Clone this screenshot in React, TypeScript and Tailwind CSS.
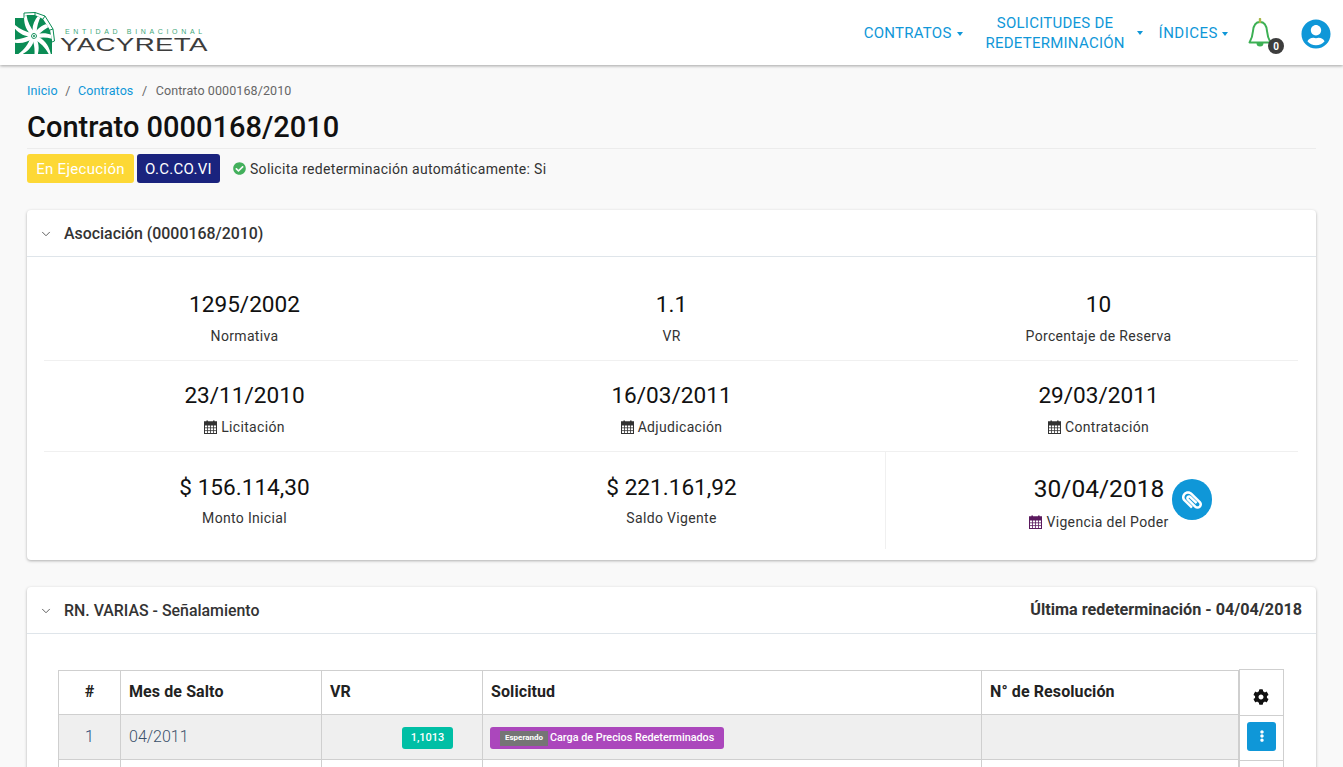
import { ChevronDown } from "lucide-react";
import { FaCheckCircle, FaCog, FaEllipsisV, FaPaperclip, FaUserCircle } from "react-icons/fa";

const blue = "text-[#0f97d8]";

function Logo() {
  const blades = Array.from({ length: 9 }, (_, i) => i * 40);
  return (
    <div className="flex items-end gap-[5px]">
      <svg width="40" height="42" viewBox="0 0 40 42" className="shrink-0">
        <defs>
          <clipPath id="logo-clip">
            <path d="M0 42 V6 H9 L11 3 L20 3 L28 7 L35 18 L37 28 V42 Z" />
          </clipPath>
        </defs>
        <path d="M9 6 L9 1 L20 0.5 L30 4 L38 17 L39.5 29 L37 30" fill="#fff" stroke="#0b8c55" strokeWidth="1" />
        <path d="M20 0.5 L20 3 M30 4 L28 7 M38 17 L35 18" stroke="#0b8c55" strokeWidth="1" />
        <g clipPath="url(#logo-clip)">
          <rect x="0" y="0" width="40" height="42" fill="#0b8c55" />
          <g transform="translate(19 24)">
            {blades.map((a) => (
              <path
                key={a}
                transform={`rotate(${a})`}
                d="M1 -3 C5 -10 14 -15 28 -13 C18 -12 9 -7 3.5 0 C3 -1 2 -2 1 -3 Z"
                fill="#fff"
              />
            ))}
          </g>
        </g>
        <circle cx="19" cy="24" r="2" fill="#fff" />
        <circle cx="19" cy="24" r="1" fill="#0b8c55" />
      </svg>
      <div className="flex flex-col">
        <span className="text-[7px] leading-[8px] tracking-[3.65px] text-[#3fa97c] font-['Liberation_Sans',sans-serif] ml-[5px] whitespace-nowrap">
          ENTIDAD BINACIONAL
        </span>
        <span className="text-[18px] leading-[17px] tracking-[0.2px] text-[#3d3d3d] font-['Liberation_Sans',sans-serif] scale-x-[1.54] origin-left whitespace-nowrap mt-[1px]">
          YACYRETA
        </span>
      </div>
    </div>
  );
}

function Caret({ gap = "ml-[4px]" }: { gap?: string }) {
  return <span className={`inline-block ${gap} align-middle border-x-[3.5px] border-x-transparent border-t-[4px] border-t-[#0f97d8]`} />;
}

function BellIcon() {
  return (
    <svg width="24" height="30" viewBox="0 0 24 30" fill="none" className="absolute left-0 top-[3px]">
      <path d="M12 4 C7 4 5.5 8 5 13 C4.5 19 3 22 1.5 24.5 H22.5 C21 22 19.5 19 19 13 C18.5 8 17 4 12 4 Z" stroke="#3cb054" strokeWidth="2" strokeLinejoin="round" />
      <path d="M12 1 V4" stroke="#a8b84a" strokeWidth="2.4" strokeLinecap="round" />
      <path d="M8.5 25 a3.5 3.5 0 0 0 7 0 Z" fill="#3cb054" />
    </svg>
  );
}

function CalendarIcon({ color = "#333" }: { color?: string }) {
  return (
    <svg width="13" height="14" viewBox="0 0 13 14" fill="none" stroke={color} strokeWidth="1" className="shrink-0">
      <rect x="0.5" y="2" width="12" height="11.5" />
      <rect x="0.5" y="2" width="12" height="3" fill={color} />
      <path d="M3.5 5 V13.5 M6.5 5 V13.5 M9.5 5 V13.5 M0.5 7.8 H12.5 M0.5 10.6 H12.5" strokeWidth="0.8" />
      <path d="M3.2 0.5 V3 M9.8 0.5 V3" strokeWidth="1.6" />
    </svg>
  );
}

function Navbar() {
  return (
    <header className="h-[65px] bg-white shadow-[0_1px_3px_rgba(0,0,0,0.35)] flex items-center justify-between pl-[15px] pr-[12px] relative">
      <Logo />
      <nav className={`flex items-center text-[15px] tracking-[0.25px] ${blue}`}>
        <span className="whitespace-nowrap pt-[1px]">CONTRATOS<Caret gap="ml-[5px]" /></span>
        <div className="flex items-center ml-[21px]">
          <span className="text-center leading-[20px] w-[143px]">SOLICITUDES DE REDETERMINACIÓN</span>
          <Caret gap="ml-[10px]" />
        </div>
        <span className="whitespace-nowrap ml-[16px] pt-[1px] tracking-[0.5px]">ÍNDICES<Caret /></span>
        <div className="relative ml-[20px] w-[40px] h-[36px] mt-[1px]">
          <BellIcon />
          <span className="absolute left-[20px] top-[23px] w-[16px] h-[16px] rounded-full bg-[#3d3d3d] text-white text-[10px] font-bold tracking-normal flex items-center justify-center">0</span>
        </div>
        <FaUserCircle size={30} className="ml-[13px] mt-[2px]" />
      </nav>
    </header>
  );
}

function Stat({ value, label, icon, iconColor, big, tight }: { value: string; label: string; icon?: boolean; iconColor?: string; big?: boolean; tight?: boolean }) {
  return (
    <div className="flex flex-col items-center">
      <span className={`${big ? "text-[24.5px]" : "text-[22.6px]"} leading-[29px] text-[#111]`}>{value}</span>
      <span className={`${big ? "mt-[9px]" : tight ? "mt-[6px]" : "mt-[7px]"} text-[14px] leading-[20px] text-[#333] flex items-center gap-[4px] tracking-[0.33px]`}>
        {icon && <CalendarIcon color={iconColor} />}
        {label}
      </span>
    </div>
  );
}

function Head({ title, right }: { title: string; right?: string }) {
  return (
    <div className="flex items-center h-[47px] border-b border-[#dfe5ea] pl-[12px] pr-[14px] pt-[1px]">
      <ChevronDown size={14} strokeWidth={1.6} className="text-[#555]" />
      <span className="ml-[11px] text-[15.9px] font-medium text-[#333]">{title}</span>
      {right && <span className="ml-auto text-[16.2px] font-bold text-[#333]">{right}</span>}
    </div>
  );
}

function AssocCard() {
  return (
    <section className="bg-white rounded-[4px] shadow-[0_1px_3px_rgba(0,0,0,0.3)] h-[350px]">
      <Head title="Asociación (0000168/2010)" />
      <div className="px-[4px]">
        <div className="grid grid-cols-3 h-[104px] pt-[33px] relative">
          <Stat value="1295/2002" label="Normativa" />
          <Stat value="1.1" label="VR" />
          <Stat value="10" label="Porcentaje de Reserva" />
          <div className="absolute left-[13px] right-[14px] bottom-0 border-b border-[#f0f0f0]" />
        </div>
        <div className="grid grid-cols-3 h-[91px] pt-[20px] relative">
          <Stat value="23/11/2010" label="Licitación" icon />
          <Stat value="16/03/2011" label="Adjudicación" icon />
          <Stat value="29/03/2011" label="Contratación" icon />
          <div className="absolute left-[13px] right-[14px] bottom-0 border-b border-[#f0f0f0]" />
        </div>
        <div className="grid grid-cols-3 h-[97px]">
          <div className="pt-[21px]"><Stat value="$ 156.114,30" label="Monto Inicial" tight /></div>
          <div className="pt-[21px]"><Stat value="$ 221.161,92" label="Saldo Vigente" tight /></div>
          <div className="pt-[22px] border-l border-[#f0f0f0] relative">
            <Stat value="30/04/2018" label="Vigencia del Poder" icon iconColor="#5b1a5e" big />
            <button className="absolute left-[286px] top-[27px] w-[40px] h-[41px] rounded-full bg-[#0f97d8] text-white flex items-center justify-center">
              <FaPaperclip size={20} className="rotate-90" />
            </button>
          </div>
        </div>
      </div>
    </section>
  );
}

const th = "border border-[#cfcfcf] align-top pt-[9px] text-[16px] font-bold text-[#222] tracking-[0.1px]";
const td = "border border-[#cfcfcf] px-[8px]";

function SaltoTable() {
  return (
    <div className="flex items-start pl-[31px]">
      <table className="border-collapse table-fixed w-[1180px] mt-[1px]">
        <colgroup>
          <col className="w-[62px]" />
          <col className="w-[201px]" />
          <col className="w-[161px]" />
          <col className="w-[499px]" />
          <col className="w-[257px]" />
        </colgroup>
        <thead>
          <tr className="h-[44px]">
            <th className={`${th} text-center`}>#</th>
            <th className={`${th} text-left px-[8px]`}>Mes de Salto</th>
            <th className={`${th} text-left px-[8px]`}>VR</th>
            <th className={`${th} text-left px-[8px]`}>Solicitud</th>
            <th className={`${th} text-left px-[8px]`}>N° de Resolución</th>
          </tr>
        </thead>
        <tbody>
          <tr className="h-[45px] bg-[#efefef]">
            <td className={`${td} text-center text-[16px] font-light text-[#2c4a7a]`}>1</td>
            <td className={`${td} text-[16px] font-light text-[#3a4f6a]`}>04/2011</td>
            <td className={td}>
              <div className="flex justify-end pr-[21px] mt-[1px]">
                <span className="w-[51px] h-[22px] pt-[1px] rounded-[3px] bg-[#00bfa5] text-white text-[11px] font-medium flex items-center justify-center">1,1013</span>
              </div>
            </td>
            <td className="border border-[#cfcfcf] pl-[7px]">
              <span className="flex items-center h-[22px] w-[234px] pt-[1px] mt-[1px] rounded-[3px] bg-[#ab47bc] text-white text-[10.8px] font-medium pl-[10px]">
                <span className="bg-[#757575] h-[15px] w-[48px] text-[8px] font-bold flex items-center justify-center mr-[2px]">Esperando</span>
                Carga de Precios Redeterminados
              </span>
            </td>
            <td className={td}></td>
          </tr>
          <tr className="h-[45px]">
            <td className={td}></td>
            <td className={td}></td>
            <td className={td}></td>
            <td className={td}></td>
            <td className={td}></td>
          </tr>
        </tbody>
      </table>
      <table className="border-collapse table-fixed w-[45px]">
        <thead>
          <tr className="h-[46px]">
            <th className="border border-[#cfcfcf] align-middle pt-[8px]">
              <FaCog size={16} className="mx-auto text-[#111] -translate-x-[1px]" />
            </th>
          </tr>
        </thead>
        <tbody>
          <tr className="h-[45px]">
            <td className="border border-[#cfcfcf] text-center">
              <button className="w-[29px] h-[29px] -translate-y-[2px] rounded-[3px] bg-[#0f97d8] text-white inline-flex items-center justify-center align-middle">
                <FaEllipsisV size={12} />
              </button>
            </td>
          </tr>
          <tr className="h-[45px]">
            <td className="border border-[#cfcfcf]"></td>
          </tr>
        </tbody>
      </table>
    </div>
  );
}

export default function App() {
  return (
    <div className="h-[767px] overflow-hidden bg-[#f9f9f9] font-['Roboto',sans-serif]">
      <Navbar />
      <main className="px-[27px]">
        <div className="pt-[17px] text-[12.5px] leading-[18px] text-[#666] tracking-[0.1px]">
          <span className={blue}>Inicio</span>
          <span className="mx-[7.5px]">/</span>
          <span className={blue}>Contratos</span>
          <span className="mx-[8.5px]">/</span>
          <span>Contrato 0000168/2010</span>
        </div>
        <h1 className="mt-[10px] text-[29px] leading-[34px] font-medium text-[#111] border-b border-[#ececec] h-[39px]">Contrato 0000168/2010</h1>
        <div className="mt-[5px] flex items-center text-[14px] tracking-[0.3px]">
          <span className="h-[29px] w-[107px] pt-[1px] rounded-[3px] bg-[#fdd835] text-white text-[15px] flex items-center justify-center">En Ejecución</span>
          <span className="h-[29px] w-[83px] pt-[1px] ml-[3px] rounded-[3px] bg-[#1a237e] text-white text-[15px] flex items-center justify-center">O.C.CO.VI</span>
          <FaCheckCircle size={13} className="ml-[13px] text-[#43b05c]" />
          <span className="ml-[4px] pt-[1px] text-[#333]">Solicita redeterminación automáticamente: Si</span>
        </div>
        <div className="mt-[27px]">
          <AssocCard />
        </div>
        <section className="mt-[27px] bg-white rounded-[4px] shadow-[0_1px_3px_rgba(0,0,0,0.3)] h-[300px]">
          <Head title="RN. VARIAS - Señalamiento" right="Última redeterminación - 04/04/2018" />
          <div className="pt-[35px]">
            <SaltoTable />
          </div>
        </section>
      </main>
    </div>
  );
}
